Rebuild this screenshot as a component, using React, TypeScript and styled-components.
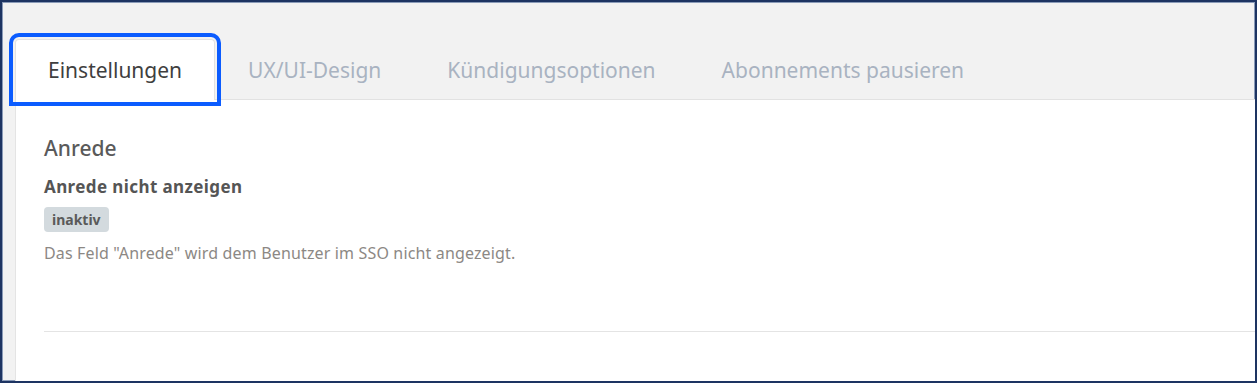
import React, { useState } from "react";
import styled, { createGlobalStyle } from "styled-components";

const GlobalStyle = createGlobalStyle`
    html, body {
        margin: 0;
        padding: 0;
        background: #ffffff;
        overflow: hidden;
    }
    * {
        box-sizing: border-box;
    }
`;

interface TabProps {
    $active: boolean;
}

const Frame = styled.div`
    width: 1257px;
    height: 383px;
    border: 2px solid #1d3462;
    box-shadow: inset 0 0 0 1px #8a9bb8;
    background: #f2f2f2;
    padding-left: 13px;
    display: flex;
    flex-direction: column;
    font-family: "Noto Sans", "Open Sans", sans-serif;
    overflow: hidden;
`;

const TabBar = styled.div`
    height: 98px;
    flex-shrink: 0;
    display: flex;
    align-items: flex-end;
    border-bottom: 1px solid #e2e2e2;
`;

// active tab keeps its focus ring above the panel
const Tab = styled.button<TabProps>`
    position: relative;
    z-index: ${({ $active }) => ($active ? 2 : 0)};
    height: 61px;
    padding: 0 32px;
    margin-bottom: -1px;
    font-family: inherit;
    font-size: 21px;
    cursor: pointer;
    color: ${({ $active }) => ($active ? "#3f3f3f" : "#a9b3c1")};
    background: ${({ $active }) => ($active ? "#ffffff" : "transparent")};
    border: 1px solid ${({ $active }) => ($active ? "#e2e2e2" : "transparent")};
    border-bottom: none;
    border-radius: 4px 4px 0 0;
    outline: ${({ $active }) => ($active ? "4px solid #0b5cff" : "none")};
    outline-offset: 2px;
`;

const Panel = styled.div`
    position: relative;
    z-index: 1;
    flex: 1;
    background: #ffffff;
    border-left: 1px solid #e4e4e4;
    padding: 34px 0 0 28px;
`;

const SectionTitle = styled.h2`
    margin: 0 0 14px;
    font-size: 21px;
    font-weight: 500;
    color: #5a5a5a;
    line-height: 28px;
`;

const FieldLabel = styled.div`
    font-size: 17px;
    font-weight: 700;
    letter-spacing: 0.4px;
    color: #555555;
    line-height: 22px;
    margin-bottom: 9px;
`;

const Badge = styled.span`
    display: inline-block;
    background: #d3dade;
    color: #5a5a5a;
    font-size: 14px;
    font-weight: 700;
    line-height: 25px;
    padding: 0 8px;
    border-radius: 4px;
`;

const Hint = styled.p`
    margin: 10px 0 0;
    font-size: 16px;
    letter-spacing: 0.15px;
    color: #8c8884;
    line-height: 22px;
`;

const Divider = styled.hr`
    margin: 67px 0 0;
    border: none;
    border-top: 1px solid #e4e4e4;
`;

const tabs = ["Einstellungen", "UX/UI-Design", "Kündigungsoptionen", "Abonnements pausieren"];

const App: React.FC = () => {
    const [active, setActive] = useState(0);

    return (
        <>
            <GlobalStyle />
            <Frame>
                <TabBar>
                    {tabs.map((tab, i) => (
                        <Tab key={tab} $active={i === active} onClick={() => setActive(i)}>
                            {tab}
                        </Tab>
                    ))}
                </TabBar>
                <Panel>
                    <SectionTitle>Anrede</SectionTitle>
                    <FieldLabel>Anrede nicht anzeigen</FieldLabel>
                    <Badge>inaktiv</Badge>
                    <Hint>Das Feld "Anrede" wird dem Benutzer im SSO nicht angezeigt.</Hint>
                    <Divider />
                </Panel>
            </Frame>
        </>
    );
};

export default App;
